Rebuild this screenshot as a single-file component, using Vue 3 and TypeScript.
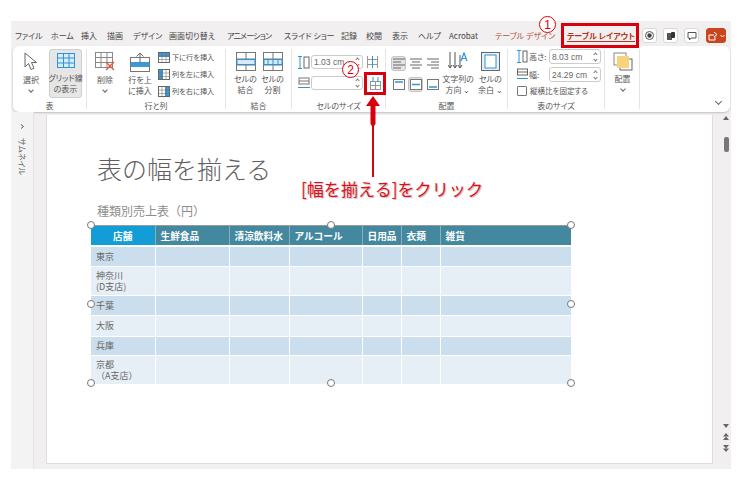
<script setup lang="ts">
const tabs = [
  { t: 'ファイル', w: 36 }, { t: 'ホーム', w: 30 }, { t: '挿入', w: 26 }, { t: '描画', w: 26 },
  { t: 'デザイン', w: 36 }, { t: '画面切り替え', w: 58 }, { t: 'アニメーション', w: 57, tight: true },
  { t: 'スライド ショー', w: 57 }, { t: '記録', w: 25 }, { t: '校閲', w: 26 }, { t: '表示', w: 26 },
  { t: 'ヘルプ', w: 31 }, { t: 'Acrobat', w: 46 },
]
const colWidths = [64, 74, 60, 73, 39, 39, 131]
const headers = ['店舗', '生鮮食品', '清涼飲料水', 'アルコール', '日用品', '衣類', '雑貨']
const rows = [
  { lines: ['東京'], h: 20 },
  { lines: ['神奈川', '(D支店)'], h: 29 },
  { lines: ['千葉'], h: 20 },
  { lines: ['大阪'], h: 21 },
  { lines: ['兵庫'], h: 19 },
  { lines: ['京都', '（A支店）'], h: 29 },
]
const handles = [
  { x: 0, y: 0 }, { x: 240, y: 0 }, { x: 480, y: 0 },
  { x: 0, y: 79 }, { x: 480, y: 79 },
  { x: 0, y: 158 }, { x: 240, y: 158 }, { x: 480, y: 158 },
]
const inserts = ['下に行を挿入', '列を左に挿入', '列を右に挿入']
</script>

<template>
  <div class="page">
    <div class="window">
      <div class="tabbar">
        <span v-for="tab in tabs" :key="tab.t" class="tab" :class="{ tight: tab.tight }" :style="{ width: tab.w + 'px' }">{{ tab.t }}</span>
        <span class="tab context design">テーブル デザイン</span>
        <span class="tab context layout">テーブル レイアウト</span>
        <div class="tools">
          <span class="tool"><svg width="9" height="9" viewBox="0 0 9 9"><circle cx="4.5" cy="4.5" r="4" fill="none" stroke="#555"/><circle cx="4.5" cy="4.5" r="2.2" fill="#444"/></svg></span>
          <span class="tool"><svg width="10" height="10" viewBox="0 0 10 10"><rect x="1" y="2" width="5" height="7" fill="#555"/><rect x="5" y="1" width="4" height="6" rx="1" fill="#333"/></svg></span>
          <span class="tool"><svg width="10" height="10" viewBox="0 0 10 10"><path d="M1 1.5h8v5.5H4L2.5 9V7H1z" fill="none" stroke="#555"/></svg></span>
          <span class="tool share"><svg width="11" height="10" viewBox="0 0 11 10"><path d="M1 4h5M1 4v5h6V6M6 1l3 2.500-3 2.500" fill="none" stroke="#fff"/></svg><svg width="5" height="4" viewBox="0 0 5 4"><path d="M.5 1l2 2 2-2" fill="none" stroke="#fff"/></svg></span>
        </div>
      </div>

      <div class="ribbon">
        <section class="group g-table">
          <div class="body">
            <div class="big w-select">
              <svg width="17" height="20" viewBox="0 0 17 20"><path d="M2 1v14l3.500-3.500 2.500 6 3-1.300-2.500-5.700h5z" fill="#fff" stroke="#666"/></svg>
              <span class="lbl">選択</span><i class="chev"></i>
            </div>
            <div class="big w-grid active">
              <svg width="18" height="15" viewBox="0 0 18 15"><rect x=".5" y=".5" width="17" height="14" fill="#d8ecfa" stroke="#2e93d8"/><path d="M6.500 0v15M12 0v15M0 5h18M0 10h18" stroke="#2e93d8"/></svg>
              <span class="lbl">グリッド線<br>の表示</span>
            </div>
          </div>
          <footer>表</footer>
        </section>

        <section class="group g-rows">
          <div class="body">
            <div class="big w-delete">
              <svg width="21" height="20" viewBox="0 0 21 20"><rect x=".5" y=".5" width="17" height="15" fill="#fff" stroke="#888"/><path d="M6 0v16M12 0v16M0 5.500h18M0 10.500h18" stroke="#888"/><path d="M11 10l8 8M19 10l-8 8" stroke="#e8503a" stroke-width="1.300"/></svg>
              <span class="lbl">削除</span><i class="chev"></i>
            </div>
            <div class="big w-above">
              <svg width="20" height="20" viewBox="0 0 20 20"><rect x=".5" y="5.500" width="19" height="14" fill="#fff" stroke="#777"/><rect x="1" y="10" width="18" height="5" fill="#3d9ad8"/><path d="M10 11V1M6.500 4.500L10 1l3.500 3.500" fill="none" stroke="#666"/></svg>
              <span class="lbl">行を上<br>に挿入</span>
            </div>
            <div class="list">
              <div v-for="(label, i) in inserts" :key="label" class="list-row">
                <svg width="12" height="11" viewBox="0 0 12 11">
                  <rect x=".5" y=".5" width="11" height="10" fill="#fff" stroke="#666"/>
                  <rect v-if="i === 0" x="1" y="1" width="10" height="4" fill="#3d9ad8"/>
                  <rect v-else :x="i === 1 ? 1 : 7" y="1" width="4" height="9" fill="#3d9ad8"/>
                  <path d="M4 0v11M8 0v11M0 4h12M0 7.500h12" stroke="#666" stroke-width=".5"/>
                </svg>
                <span>{{ label }}</span>
              </div>
            </div>
          </div>
          <footer>行と列</footer>
        </section>

        <section class="group g-merge">
          <div class="body">
            <div class="big w-merge">
              <svg width="20" height="19" viewBox="0 0 20 19"><rect x=".5" y=".5" width="19" height="18" fill="#fff" stroke="#777"/><path d="M10 0v7M10 13v6M0 7h20M0 13h20" stroke="#777"/><rect x="1" y="7.500" width="18" height="5" fill="#d6eafa" stroke="#2e93d8"/></svg>
              <span class="lbl">セルの<br>結合</span>
            </div>
            <div class="big w-merge">
              <svg width="20" height="19" viewBox="0 0 20 19"><rect x=".5" y=".5" width="19" height="18" fill="#fff" stroke="#777"/><path d="M10 0v7M10 13v6M0 7h20M0 13h20" stroke="#777"/><rect x="1" y="7.500" width="18" height="5" fill="#d6eafa" stroke="#2e93d8"/><path d="M5 7v6M10 7v6M15 7v6" stroke="#2e93d8"/></svg>
              <span class="lbl">セルの<br>分割</span>
            </div>
          </div>
          <footer>結合</footer>
        </section>

        <section class="group g-size">
          <div class="body">
            <div class="size-row">
              <svg width="12" height="13" viewBox="0 0 12 13"><path d="M2 0v13M0 .5h4M0 12.500h4" stroke="#2e93d8"/><rect x="6" y="1" width="5" height="11" fill="#fff" stroke="#666"/></svg>
              <span class="field"><span>1.03 cm</span><i class="spin"></i></span>
              <svg class="mini" width="11" height="12" viewBox="0 0 11 12"><path d="M.5 3.500h10M.5 8.500h10" stroke="#999"/><path d="M.5 0v12M10.500 0v12" stroke="#999"/><path d="M5.500 0v12" stroke="#2e93d8"/></svg>
            </div>
            <div class="size-row">
              <svg width="12" height="13" viewBox="0 0 12 13"><rect x="1" y="1" width="10" height="6" fill="#fff" stroke="#777"/><path d="M1 4h10" stroke="#777"/><path d="M0 10.500h12" stroke="#2e93d8"/></svg>
              <span class="field"><span></span><i class="spin"></i></span>
            </div>
          </div>
          <footer>セルのサイズ</footer>
        </section>

        <section class="group g-align">
          <div class="body">
            <div class="align-grid">
              <span class="al on"><svg width="12" height="11" viewBox="0 0 12 11"><path d="M0 1h12M0 4h8M0 7h12M0 10h8" stroke="#666"/></svg></span>
              <span class="al"><svg width="12" height="11" viewBox="0 0 12 11"><path d="M0 1h12M2 4h8M0 7h12M2 10h8" stroke="#666"/></svg></span>
              <span class="al"><svg width="12" height="11" viewBox="0 0 12 11"><path d="M0 1h12M4 4h8M0 7h12M4 10h8" stroke="#666"/></svg></span>
              <span class="al"><svg width="12" height="11" viewBox="0 0 12 11"><rect x=".5" y=".5" width="11" height="10" fill="#fff" stroke="#777"/><path d="M2 3h8" stroke="#2e93d8" stroke-width="1.500"/></svg></span>
              <span class="al on"><svg width="12" height="11" viewBox="0 0 12 11"><rect x=".5" y=".5" width="11" height="10" fill="#fff" stroke="#777"/><path d="M2 5.500h8" stroke="#2e93d8" stroke-width="1.500"/></svg></span>
              <span class="al"><svg width="12" height="11" viewBox="0 0 12 11"><rect x=".5" y=".5" width="11" height="10" fill="#fff" stroke="#777"/><path d="M2 8h8" stroke="#2e93d8" stroke-width="1.500"/></svg></span>
            </div>
            <div class="big w-dir">
              <svg width="20" height="19" viewBox="0 0 20 19"><path d="M2 0v16M7 0v16M12 3v13M0 13l2 3 2-3M5 13l2 3 2-3M10 13l2 3 2-3" fill="none" stroke="#555"/><path d="M13 9l3-8 3 8M14.200 6.500h3.600" fill="none" stroke="#2e93d8" stroke-width="1.200"/></svg>
              <span class="lbl">文字列の<br>方向 ⌄</span>
            </div>
            <div class="big w-margin">
              <svg width="19" height="19" viewBox="0 0 19 19"><rect x=".5" y=".5" width="18" height="18" fill="#e4f1fb" stroke="#666"/><rect x="4" y="3" width="11" height="13" fill="#fff" stroke="#2e93d8"/></svg>
              <span class="lbl">セルの<br>余白 ⌄</span>
            </div>
          </div>
          <footer>配置</footer>
        </section>

        <section class="group g-tsize">
          <div class="body">
            <div class="tsize-row">
              <svg width="11" height="13" viewBox="0 0 11 13"><path d="M2 0v13M0 .5h4M0 12.500h4" stroke="#2e93d8"/><rect x="6" y="1" width="4" height="11" fill="#fff" stroke="#666"/></svg>
              <span class="tl">高さ:</span>
              <span class="field tf"><span>8.03 cm</span><i class="spin"></i></span>
            </div>
            <div class="tsize-row">
              <svg width="11" height="13" viewBox="0 0 11 13"><rect x=".5" y="1" width="10" height="6" fill="#fff" stroke="#666"/><path d="M.5 4h10" stroke="#666"/><path d="M0 10.500h11" stroke="#2e93d8"/></svg>
              <span class="tl">幅:</span>
              <span class="field tf"><span>24.29 cm</span><i class="spin"></i></span>
            </div>
            <div class="check"><i></i><span>縦横比を固定する</span></div>
          </div>
          <footer>表のサイズ</footer>
        </section>

        <section class="group g-arrange">
          <div class="big">
            <svg width="20" height="19" viewBox="0 0 20 19"><rect x="1" y="1" width="12" height="12" fill="#fff" stroke="#888"/><rect x="7" y="7" width="12" height="11" fill="#fff" stroke="#666"/><rect x="4" y="4" width="12" height="12" fill="#f8d27c"/></svg>
            <span class="lbl">配置</span><i class="chev"></i>
          </div>
        </section>

        <div class="collapse"><i class="chev big-chev"></i></div>
      </div>

      <div class="work">
        <aside class="thumbs">
          <svg width="5" height="5" viewBox="0 0 5 5"><path d="M1 .5l2.500 2-2.500 2" fill="none" stroke="#555"/></svg>
          <span class="thumbs-label">サムネイル</span>
        </aside>
        <main class="stage">
          <div class="slide">
            <h1>表の幅を揃える</h1>
            <p class="caption">種類別売上表（円）</p>
            <div class="table-wrap">
              <table>
                <colgroup><col v-for="(w, i) in colWidths" :key="i" :style="{ width: w + 'px' }"></colgroup>
                <thead>
                  <tr><th v-for="(h, i) in headers" :key="h" :class="{ first: i === 0 }">{{ h }}</th></tr>
                </thead>
                <tbody>
                  <tr v-for="row in rows" :key="row.lines[0]" :style="{ height: row.h + 'px' }">
                    <td><template v-for="(line, i) in row.lines" :key="line"><br v-if="i > 0">{{ line }}</template></td>
                    <td v-for="n in 6" :key="n"></td>
                  </tr>
                </tbody>
              </table>
              <i v-for="(p, i) in handles" :key="i" class="handle" :style="{ left: p.x + 'px', top: p.y + 'px' }"></i>
            </div>
          </div>
        </main>
        <div class="scroll">
          <i class="up"></i>
          <i class="thumb"></i>
          <span class="spacer"></span>
          <i class="down"></i>
          <i class="dbl-up"></i>
          <i class="dbl-down"></i>
        </div>
      </div>
    </div>

    <div class="note-box box-tab"></div>
    <div class="note-box box-btn">
      <svg width="11" height="13" viewBox="0 0 11 13"><path d="M.5 4.500h10M.5 8.500h10M.5 12.500h10M.5 4v9M10.500 4v9M5.500 4v9" stroke="#8a9aa5"/><path d="M3 0v5M8 0v5" stroke="#2e93d8"/></svg>
    </div>
    <span class="num num1">1</span>
    <span class="num num2">2</span>
    <div class="arrow">
      <svg width="14" height="82" viewBox="0 0 14 82"><path d="M7 0L14 10H9.500V28L8 30V81H6V30L4.500 28V10H0z" fill="#d8000c"/></svg>
    </div>
    <div class="callout">[幅を揃える]をクリック</div>
  </div>
</template>

<style>
html, body { margin: 0; background: #fff; }
</style>

<style scoped>
.page {
  position: relative;
  width: 740px;
  height: 493px;
  overflow: hidden;
  background: #fff;
  font-family: "Noto Sans CJK JP", "Noto Sans", sans-serif;
  font-feature-settings: "palt";
  color: #555;
}
.window {
  display: flex;
  flex-direction: column;
  width: 720px;
  height: 448px;
  margin: 21px 0 0 11px;
  position: absolute;
  background: #f1efef;
}
.tabbar {
  display: flex;
  align-items: center;
  height: 25px;
  padding: 4px 0 0 4px;
  font-size: 8px;
  box-sizing: border-box;
}
.tab { flex: none; white-space: nowrap; color: #444; }
.tab.tight { letter-spacing: -.8px; }
.context.design { color: #b8503a; width: 72px; }
.context.layout { color: #b5341c; font-weight: 700; width: 76px; text-decoration: underline; text-underline-offset: 2px; }
.tools { display: flex; gap: 6px; margin-left: -1px; }
.tool {
  display: flex; align-items: center; justify-content: center; gap: 1px;
  width: 15px; height: 15px; box-sizing: border-box;
  background: #fff; border: 1px solid #d8d8d8; border-radius: 3px;
}
.tool.share { width: 20px; background: #c8451f; border-color: #c8451f; margin-left: 1px; }

.ribbon {
  display: flex;
  flex: none;
  height: 66px;
  margin: 0 1px 0 2px;
  background: #fff;
  border-radius: 6px;
  box-shadow: 0 1px 2px rgba(0, 0, 0, .2);
  box-sizing: border-box;
}
.group {
  display: flex;
  flex-direction: column;
  flex: none;
  box-sizing: border-box;
  margin: 3px 0;
  border-right: 1px solid #e4e4e4;
}
.group footer { height: 11px; line-height: 11px; font-size: 8px; text-align: center; margin-top: auto; margin-bottom: -2px; color: #555; }
.body { display: flex; flex: 1; min-height: 0; }
.g-table { width: 74px; }
.g-rows { width: 139px; }
.g-merge { width: 66px; }
.g-size { width: 94px; }
.g-align { width: 122px; }
.g-tsize { width: 97px; }
.g-arrange { width: 35px; }
.big {
  display: flex; flex-direction: column; align-items: center;
  box-sizing: border-box; flex: none;
  padding-top: 3px;
}
.lbl { font-size: 8px; line-height: 10.500px; text-align: center; margin-top: 3px; white-space: nowrap; color: #555; }
.chev {
  display: block; width: 3px; height: 3px; margin-top: 2px;
  border-right: 1px solid #666; border-bottom: 1px solid #666; transform: rotate(45deg);
}
.w-select { width: 36px; }
.w-grid { width: 33px; height: 49px; background: #e6e6e6; border: 1px solid #cfcfcf; border-radius: 3px; padding-top: 3px; }
.w-grid .lbl { margin-top: 5px; }
.w-delete { width: 36px; }
.w-above { width: 34px; }
.list { display: flex; flex-direction: column; gap: 5px; margin: 2px 0 0 1px; font-size: 7.200px; }
.list-row { display: flex; align-items: center; gap: 2px; height: 12px; white-space: nowrap; }
.w-merge { width: 27px; }
.g-merge .body { padding-left: 6px; }
.g-size .body { flex-direction: column; gap: 7px; padding: 6px 0 0 6px; }
.size-row { display: flex; align-items: center; gap: 1px; }
.field {
  display: flex; align-items: center; justify-content: space-between;
  width: 52px; height: 14px; box-sizing: border-box; padding: 0 2px;
  border: 1px solid #ccc; border-radius: 3px; font-family: "Liberation Sans", sans-serif; font-size: 8.500px; color: #666;
}
.spin { width: 4px; height: 8px; position: relative; }
.spin::before, .spin::after { content: ""; position: absolute; left: 0; width: 2px; height: 2px; border-left: 1px solid #777; }
.spin::before { top: 0; border-top: 1px solid #777; transform: rotate(45deg); }
.spin::after { bottom: 0; border-bottom: 1px solid #777; transform: rotate(-45deg); }
.mini { margin-left: 3px; }
.align-grid {
  display: grid; grid-template-columns: repeat(3, 17px); grid-auto-rows: 21px;
  margin: 4px 0 0 4px; align-items: center; justify-items: center; height: 42px;
}
.al { display: flex; align-items: center; justify-content: center; width: 15px; height: 15px; box-sizing: border-box; border-radius: 3px; border: 1px solid transparent; }
.al.on { background: #e4e4e4; border-color: #c4c4c4; }
.w-dir { width: 34px; }
.w-margin { width: 31px; }
.g-tsize .body { flex-direction: column; padding: 0 0 0 9px; gap: 3px; }
.tsize-row { display: flex; align-items: center; height: 15px; }
.tl { width: 21px; font-size: 8px; padding-left: 1px; box-sizing: border-box; white-space: nowrap; }
.tf { height: 15px; width: 52px; }
.check { display: flex; align-items: center; gap: 3px; font-size: 7.500px; white-space: nowrap; }
.check i { width: 8px; height: 8px; border: 1px solid #777; border-radius: 1px; }
.g-arrange .big { width: 35px; }
.collapse { flex: 1; display: flex; justify-content: flex-end; align-items: flex-end; padding: 0 9px 8px 0; }
.big-chev { width: 4px; height: 4px; }

.work { display: flex; flex: 1; min-height: 0; }
.thumbs {
  display: flex; flex-direction: column; align-items: center;
  width: 23px; flex: none; padding-top: 12px; box-sizing: border-box;
  background: #f4f3f3; border-right: 1px solid #e6e4e4;
}
.thumbs-label { writing-mode: vertical-rl; text-orientation: sideways; font-size: 8px; margin-top: 9px; color: #666; }
.stage { width: 679px; flex: none; padding: 3px 0 5px 12px; box-sizing: border-box; }
.slide {
  height: 100%; width: 667px; box-sizing: border-box;
  background: #fff; border: 1px solid #dfdddd; border-top: 0;
  padding: 36px 0 0 44px;
  font-feature-settings: normal;
}
h1 { margin: 0 0 0 6px; font-size: 25px; line-height: 34px; font-weight: 300; color: #5f5f5f; white-space: nowrap; }
.caption { margin: 17px 0 0 6px; font-size: 12px; line-height: 18px; color: #8d8d8d; white-space: nowrap; }
.table-wrap { position: relative; width: 480px; margin-top: 5px; }
table {
  width: 480px; height: 158px; table-layout: fixed; border-collapse: collapse; border-spacing: 0;
  font-size: 9px; color: #666;
  border-top: 1px solid #9a9a9a; border-bottom: 1px solid #9a9a9a;
}
th {
  height: 19px; padding: 0 0 0 5px; text-align: left; background: #43889f; color: #fff; font-weight: 700;
  border-left: 1px solid #87afbf; border-bottom: 2px solid #fff; white-space: nowrap; font-size: 9.700px;
}
th.first { background: #129dd6; text-align: center; padding: 0; border-left: 0; }
td { padding: 0 0 0 5px; line-height: 11px; border-left: 1px solid #fff; border-bottom: 1px solid #fff; vertical-align: middle; white-space: nowrap; }
td:first-child { border-left: 0; }
tbody tr:nth-child(odd) td { background: #cbdeed; }
tbody tr:nth-child(even) td { background: #e6eef6; }
.handle {
  position: absolute; width: 8px; height: 8px; margin: -4px 0 0 -4px;
  background: #fff; border: 1.500px solid #777; border-radius: 50%; box-sizing: border-box;
}
.scroll {
  display: flex; flex-direction: column; align-items: center;
  flex: 1; padding: 4px 0 17px; box-sizing: border-box; position: relative; left: 4px;
}
.scroll i { display: block; flex: none; }
.up { width: 0; height: 0; border: 3px solid transparent; border-top: 0; border-bottom: 4px solid #666; }
.thumb { width: 5px; height: 15px; background: #777; border-radius: 2px; margin-top: 17px; }
.spacer { flex: 1; }
.down { width: 0; height: 0; border: 3px solid transparent; border-bottom: 0; border-top: 4px solid #666; }
.dbl-up, .dbl-down { width: 6px; height: 7px; background: #666; margin-top: 5px; clip-path: polygon(50% 0, 100% 50%, 50% 50%, 100% 100%, 0 100%, 50% 50%, 0 50%); }
.dbl-down { transform: rotate(180deg); }

.note-box { position: absolute; box-sizing: border-box; border: 3px solid #d8000c; }
.box-tab { left: 561px; top: 23px; width: 78px; height: 25px; }
.box-btn { left: 364px; top: 72px; width: 22px; height: 23px; display: flex; align-items: center; justify-content: center; background: #fff; }
.num {
  position: absolute; width: 17px; height: 17px; box-sizing: border-box;
  display: flex; align-items: center; justify-content: center;
  border: 1px solid #d8000c; border-radius: 50%; background: #fff; color: #d8000c;
  font-family: "Liberation Sans", sans-serif; font-size: 12px;
}
.num1 { left: 539px; top: 16px; }
.num2 { left: 342px; top: 61px; }
.arrow { position: absolute; left: 366px; top: 96px; line-height: 0; }
.callout {
  position: absolute; left: 301px; top: 177px; white-space: nowrap;
  font-size: 17.100px; line-height: 24px; font-weight: 400; color: #e0101a;
  font-feature-settings: normal;
  text-shadow: 1px 1px 1px #bbb;
}
</style>
